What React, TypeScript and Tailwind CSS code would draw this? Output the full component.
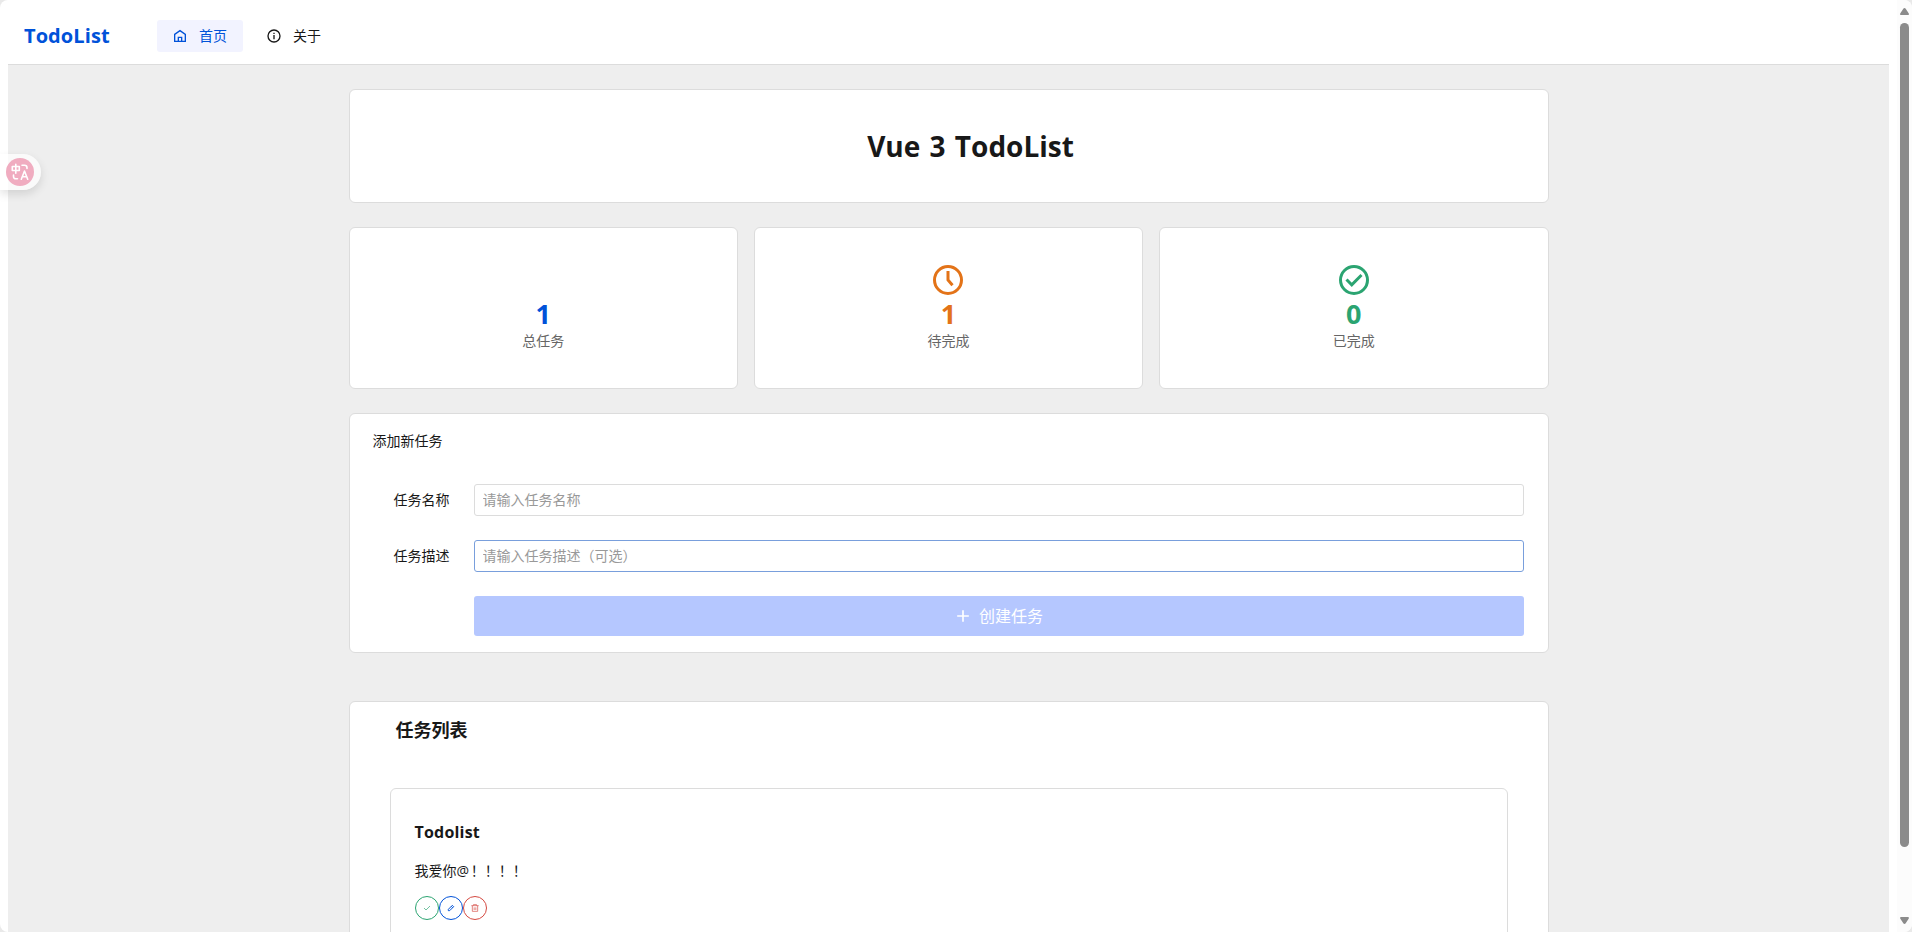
import type { ReactNode } from "react";

const font = "font-['Open_Sans','Noto_Sans_CJK_SC',sans-serif]";

function Icon({ className, width = 2, children }: { className: string; width?: number; children: ReactNode }) {
  return (
    <svg viewBox="0 0 24 24" className={className} fill="none" stroke="currentColor" strokeWidth={width}>
      {children}
    </svg>
  );
}

function Header() {
  return (
    <header className="mx-2 flex h-[65px] shrink-0 items-center border-b border-[#dcdcdc] bg-white pt-2 pl-4">
      <div className="w-[133px] text-[20px] leading-7 font-bold tracking-[0.08px] text-[#0052d9]">TodoList</div>
      <nav className="flex gap-2 text-sm">
        <a className="flex h-8 w-[86px] items-center rounded-[3px] bg-[#f2f3ff] pl-[15px] text-[#0052d9]">
          <Icon className="mr-[11px] size-4">
            <path d="M4 9.500 12 4l8 5.500V20H4z" />
            <path d="M9.500 20v-6h5v6" />
          </Icon>
          首页
        </a>
        <a className="flex h-8 w-[86px] items-center pl-[15px] text-[#181818]">
          <Icon className="mr-[11px] size-4">
            <circle cx="12" cy="12" r="9" />
            <path d="M12 10.500V17M12 7v2" />
          </Icon>
          关于
        </a>
      </nav>
    </header>
  );
}

function Stat({ color, value, label, icon }: { color: string; value: number; label: string; icon?: ReactNode }) {
  return (
    <div className={`flex h-[162px] flex-col items-center rounded-md border border-[#dcdcdc] bg-white pt-[34px] ${color}`}>
      <div className="h-9">{icon}</div>
      <div className="h-8 text-[27px] leading-8 font-bold">{value}</div>
      <div className="text-sm leading-[22px] text-[#666]">{label}</div>
    </div>
  );
}

function Field({ label, placeholder, border }: { label: string; placeholder: string; border: string }) {
  return (
    <div className="mb-6 flex h-8">
      <label className="w-[100px] pr-6 text-right text-sm leading-8 text-[#181818]">{label}</label>
      <input
        placeholder={placeholder}
        className={`h-8 flex-1 rounded-[3px] border bg-white px-2 pb-[2px] text-sm outline-none placeholder:text-[#999] ${border}`}
      />
    </div>
  );
}

function TaskList() {
  return (
    <section className="mt-12 h-[300px] rounded-md border border-[#dcdcdc] bg-white px-10 pt-[15px]">
      <h2 className="pl-[6px] text-[18px] leading-[26px] font-bold">任务列表</h2>
      <div className="mt-[45px] h-[220px] rounded-md border border-[#dcdcdc] px-6 pt-[31px]">
        <h3 className="text-base leading-6 font-bold tracking-[0.2px]">Todolist</h3>
        <p className="mt-4 text-sm leading-[22px]">
          我爱你<span className="mr-px tracking-[0.8px]">@</span>！！！！
        </p>
        <div className="mt-[14px] flex">
          <button className="flex size-6 items-center justify-center rounded-full border border-[#2ba471] text-[#2ba471]">
            <Icon className="size-2" width={2}>
              <path d="m3 12 6 6L21 6" />
            </Icon>
          </button>
          <button className="flex size-6 items-center justify-center rounded-full border border-[#0052d9] text-[#0052d9]">
            <Icon className="size-2" width={3}>
              <path d="M4 20v-4L16 4l4 4L8 20zM13 7l4 4" />
            </Icon>
          </button>
          <button className="flex size-6 items-center justify-center rounded-full border border-[#d54941] text-[#d54941]">
            <Icon className="size-2" width={2}>
              <path d="M1 5h22M4 5v17h16V5M8 5V1h8v4M9.500 10v8M14.500 10v8" />
            </Icon>
          </button>
        </div>
      </div>
    </section>
  );
}

function Scrollbar() {
  return (
    <div className="flex w-[15px] shrink-0 flex-col items-center bg-[#fcfcfc] pt-2 pb-2">
      <svg className="h-[7px] w-[9px] text-[#8b8b8b]" viewBox="0 0 9 7" fill="currentColor">
        <path d="M4.500 0Q5.200 0 5.700.8L8.800 5.500Q9.200 7 8 7H1Q-.2 7 .2 5.500L3.300.8Q3.800 0 4.500 0z" />
      </svg>
      <div className="mt-2 h-[824px] w-[9px] rounded-full bg-[#8b8b8b]" />
      <svg className="mt-auto h-[7px] w-[9px] text-[#8b8b8b]" viewBox="0 0 9 7" fill="currentColor">
        <path d="M4.500 7Q5.200 7 5.700 6.200L8.800 1.500Q9.200 0 8 0H1Q-.2 0 .2 1.500L3.300 6.200Q3.800 7 4.500 7z" />
      </svg>
    </div>
  );
}

function TranslateBadge() {
  return (
    <div className="absolute top-[154px] left-0 flex h-9 w-[41px] items-center rounded-r-full bg-white/70 pl-[6px] shadow-[0_4px_10px_rgba(0,0,0,0.12)]">
      <svg viewBox="0 0 28 28" className="size-7" fill="none" stroke="white" strokeWidth="1.600" strokeLinecap="round" strokeLinejoin="round">
        <circle cx="14" cy="14" r="14" fill="#f0acc0" stroke="none" />
        <path d="M6.300 8.500h7v4h-7zM9.800 6.300v9M16 7.300h2.500q2.500 0 2.500 2.500v.7M7.500 17v1.500q0 2.300 2.500 2.300h1.500M15.300 21.200 18.500 13l3.200 8.200M16.300 18.800h4.400" />
      </svg>
    </div>
  );
}

export default function App() {
  return (
    <div className="h-[932px] overflow-hidden bg-[#e9e9e9]">
      <div className={`relative flex h-full overflow-hidden rounded-[8px] bg-white text-[#181818] ${font}`}>
        <div className="flex min-w-0 flex-1 flex-col overflow-hidden">
          <Header />
          <main className="mx-2 flex-1 bg-[#eee] pt-6">
            <div className="mx-auto w-[1200px]">
              <section className="flex h-[114px] items-center justify-center rounded-md border border-[#dcdcdc] bg-white pl-[44px]">
                <h1 className="text-[28px] font-bold [word-spacing:2px]">Vue 3 TodoList</h1>
              </section>
              <section className="mt-6 grid grid-cols-3 gap-4">
                <Stat color="text-[#0052d9]" value={1} label="总任务" />
                <Stat
                  color="text-[#e37318]"
                  value={1}
                  label="待完成"
                  icon={
                    <Icon className="size-9">
                      <circle cx="12" cy="12" r="9" />
                      <path d="M12 6v6l3 3.500" />
                    </Icon>
                  }
                />
                <Stat
                  color="text-[#2ba471]"
                  value={0}
                  label="已完成"
                  icon={
                    <Icon className="size-9">
                      <circle cx="12" cy="12" r="9" />
                      <path d="m7 11.700 3.500 3.500 6.500-6.500" />
                    </Icon>
                  }
                />
              </section>
              <section className="mt-6 h-[240px] rounded-md border border-[#dcdcdc] bg-white pr-6 pl-6">
                <div className="-ml-px pt-4 text-sm leading-[22px]">添加新任务</div>
                <div className="mt-8">
                  <Field label="任务名称" placeholder="请输入任务名称" border="border-[#dcdcdc]" />
                  <Field label="任务描述" placeholder="请输入任务描述（可选）" border="border-[#799fdc]" />
                  <button className="ml-[100px] flex h-10 w-[1050px] items-center justify-center rounded-[3px] bg-[#b5c7ff] pr-px text-base text-white">
                    <Icon className="mr-[6px] size-5">
                      <path d="M12 5v14M5 12h14" />
                    </Icon>
                    创建任务
                  </button>
                </div>
              </section>
              <TaskList />
            </div>
          </main>
        </div>
        <Scrollbar />
        <TranslateBadge />
      </div>
    </div>
  );
}
